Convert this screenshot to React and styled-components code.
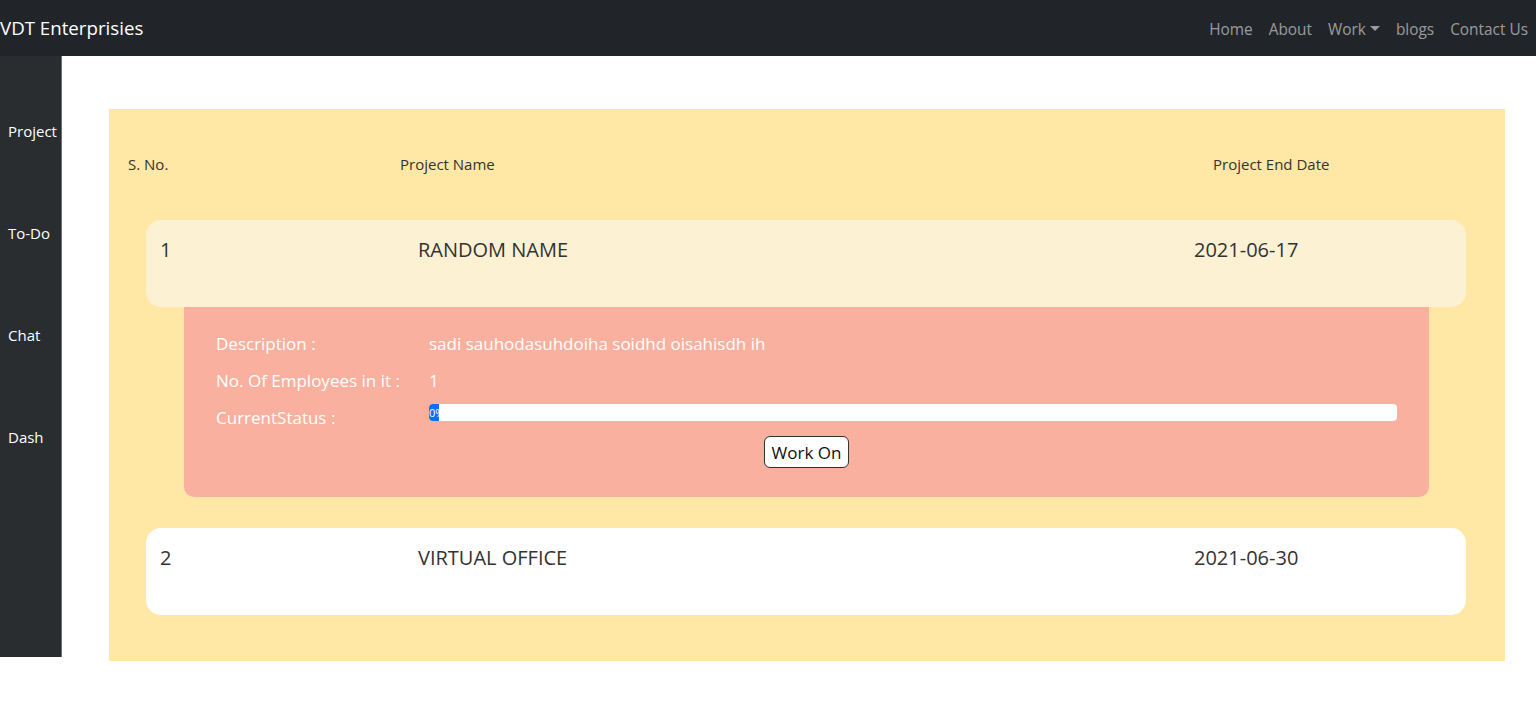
import React from "react";
import styled, { createGlobalStyle } from "styled-components";

const GlobalStyle = createGlobalStyle`
  body {
    margin: 0;
    font-family: "Open Sans", "Liberation Sans", sans-serif;
    color: #212529;
    background: #fff;
  }
  * { box-sizing: border-box; }
`;

const projects = [
  {
    id: 1,
    name: "RANDOM NAME",
    end: "2021-06-17",
    open: true,
    description: "sadi sauhodasuhdoiha soidhd oisahisdh ih",
    employees: 1,
    progress: 0,
  },
  { id: 2, name: "VIRTUAL OFFICE", end: "2021-06-30", open: false },
];

const Navbar = styled.nav`
  height: 56px;
  background: #212529;
  display: flex;
  align-items: center;
  justify-content: space-between;
`;

const Brand = styled.a`
  color: #fff;
  font-size: 18.7px;
  line-height: 30px;
`;

const NavLinks = styled.ul`
  list-style: none;
  display: flex;
  margin: 3px 0 0;
  padding: 0;
`;

const NavLink = styled.li`
  color: rgba(255, 255, 255, 0.55);
  font-size: 15.4px;
  line-height: 24px;
  padding: 0 8px;
  display: flex;
  align-items: center;
`;

const Caret = styled.span`
  display: inline-block;
  margin-left: 4px;
  border-top: 5px solid currentColor;
  border-left: 5px solid transparent;
  border-right: 5px solid transparent;
  margin-bottom: 2px;
`;

const Body = styled.div`
  display: flex;
  align-items: flex-start;
`;

const Sidebar = styled.aside`
  width: 62px;
  height: 601px;
  background: #2a2d30;
  border-right: 1px solid #6b6e71;
  display: flex;
  flex-direction: column;
  gap: 79px;
  padding: 64px 0 0 8px;
`;

const SideItem = styled.div`
  color: #fff;
  font-size: 15px;
  line-height: 23px;
`;

const Main = styled.main`
  flex: 1;
  padding: 53px 31px 0 47px;
`;

const Board = styled.section`
  background: #ffe8a6;
  padding: 44px 39px 46px 19px;
`;

const HeadRow = styled.div`
  display: grid;
  grid-template-columns: 272px 813px auto;
  font-size: 15px;
  line-height: 22px;
  color: #333;
  margin-bottom: 45px;
`;

const List = styled.div`
  display: flex;
  flex-direction: column;
  gap: 31px;
  padding-left: 18px;
`;

const Item = styled.div``;

const Card = styled.div`
  display: grid;
  grid-template-columns: 258px 776px auto;
  height: 87px;
  padding: 15px 0 0 14px;
  border-radius: 15px;
  background: ${(p) => (p.$open ? "#fcf1d3" : "#fff")};
  font-size: 20px;
  line-height: 30px;
  color: #333;
`;

const Details = styled.div`
  margin: 0 37px 0 38px;
  background: #f9b09f;
  border-radius: 0 0 10px 10px;
  padding: 24px 32px 29px 32px;
  color: #fff;
`;

const InfoList = styled.div`
  display: flex;
  flex-direction: column;
  gap: 12px;
`;

const InfoRow = styled.div`
  display: grid;
  grid-template-columns: 213px 1fr;
  font-size: 17px;
  line-height: 25px;
`;

const Progress = styled.div`
  height: 17px;
  margin-top: -1px;
  background: #fff;
  border-radius: 4px;
  overflow: hidden;
`;

const Fill = styled.div`
  height: 100%;
  min-width: 10px;
  background: #0d6efd;
  color: #fff;
  font-size: 11px;
  line-height: 17px;
  overflow: hidden;
  white-space: nowrap;
`;

const Actions = styled.div`
  display: flex;
  justify-content: center;
  margin-top: 6px;
`;

const Button = styled.button`
  height: 32px;
  padding: 0 7px;
  background: #fff;
  border: 1.5px solid #333;
  border-radius: 6px;
  font-family: "Open Sans", "Liberation Sans", sans-serif;
  font-size: 17px;
  color: #111;
`;

export default function App() {
  return (
    <>
      <GlobalStyle />
      <Navbar>
        <Brand>VDT Enterprisies</Brand>
        <NavLinks>
          <NavLink>Home</NavLink>
          <NavLink>About</NavLink>
          <NavLink>
            Work<Caret />
          </NavLink>
          <NavLink>blogs</NavLink>
          <NavLink>Contact Us</NavLink>
        </NavLinks>
      </Navbar>
      <Body>
        <Sidebar>
          {["Project", "To-Do", "Chat", "Dash"].map((s) => (
            <SideItem key={s}>{s}</SideItem>
          ))}
        </Sidebar>
        <Main>
          <Board>
            <HeadRow>
              <span>S. No.</span>
              <span>Project Name</span>
              <span>Project End Date</span>
            </HeadRow>
            <List>
              {projects.map((p) => (
                <Item key={p.id}>
                  <Card $open={p.open}>
                    <span>{p.id}</span>
                    <span>{p.name}</span>
                    <span>{p.end}</span>
                  </Card>
                  {p.open && (
                    <Details>
                      <InfoList>
                        <InfoRow>
                          <span>Description :</span>
                          <span>{p.description}</span>
                        </InfoRow>
                        <InfoRow>
                          <span>No. Of Employees in it :</span>
                          <span>{p.employees}</span>
                        </InfoRow>
                        <InfoRow>
                          <span>CurrentStatus :</span>
                          <Progress>
                            <Fill style={{ width: `${p.progress}%` }}>
                              {p.progress}%
                            </Fill>
                          </Progress>
                        </InfoRow>
                      </InfoList>
                      <Actions>
                        <Button>Work On</Button>
                      </Actions>
                    </Details>
                  )}
                </Item>
              ))}
            </List>
          </Board>
        </Main>
      </Body>
    </>
  );
}
